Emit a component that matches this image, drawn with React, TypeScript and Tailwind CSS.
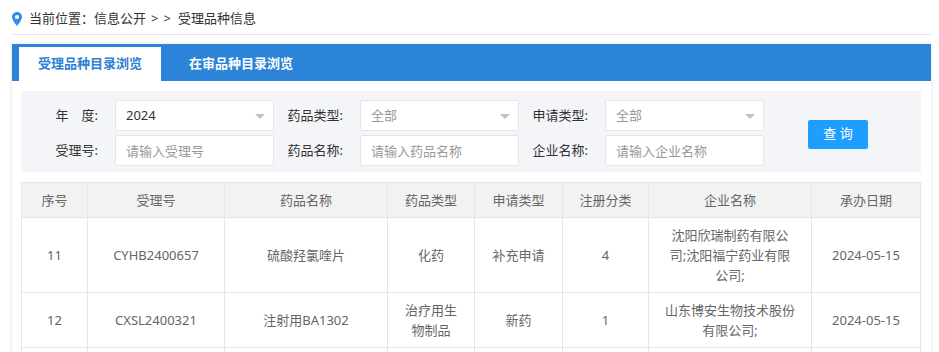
import React from "react";

const font = { fontFamily: '"Noto Sans", "Noto Sans CJK SC", sans-serif' };

function Pin() {
  return (
    <svg width="10" height="14" viewBox="0 0 10 14" className="shrink-0">
      <path
        fillRule="evenodd"
        fill="#2d8cf0"
        d="M5 0C2.2 0 0 2.2 0 5c0 3.4 5 9 5 9s5-5.6 5-9C10 2.2 7.8 0 5 0zm0 2.9a2.1 2.1 0 1 1 0 4.2 2.1 2.1 0 0 1 0-4.2z"
      />
    </svg>
  );
}

function Arrow() {
  return (
    <svg width="10" height="5" viewBox="0 0 10 5" className="absolute right-[8px] top-[13px]">
      <path d="M0 0h10L5 5z" fill="#c2c2c2" />
    </svg>
  );
}

function Label({ children }: { children: React.ReactNode }) {
  return (
    <div className="w-[86px] shrink-0 pr-[17px] text-right text-[13px] text-[#333] whitespace-nowrap">
      {children}
    </div>
  );
}

function Select({ value, dark }: { value: string; dark?: boolean }) {
  return (
    <div
      className={`relative flex h-[31px] w-[159px] items-center rounded-[2px] border border-[#e6e6e6] bg-white pl-[10px] text-[13px] ${
        dark ? "text-[#333]" : "text-[#999]"
      }`}
    >
      {value}
      <Arrow />
    </div>
  );
}

function Input({ placeholder }: { placeholder: string }) {
  return (
    <input
      placeholder={placeholder}
      className="h-[31px] w-[159px] rounded-[2px] border border-[#e6e6e6] bg-white pl-[10px] text-[13px] text-[#333] outline-none placeholder:text-[#999]"
      style={font}
    />
  );
}

const rows = [
  ["11", "CYHB2400657", "硫酸羟氯喹片", "化药", "补充申请", "4", "沈阳欣瑞制药有限公司;沈阳福宁药业有限公司;", "2024-05-15"],
  ["12", "CXSL2400321", "注射用BA1302", "治疗用生物制品", "新药", "1", "山东博安生物技术股份有限公司;", "2024-05-15"],
];

const headers = ["序号", "受理号", "药品名称", "药品类型", "申请类型", "注册分类", "企业名称", "承办日期"];
const widths = [66, 137, 163, 87, 88, 86, 163, 109];

export default function App() {
  return (
    <div className="w-[939px] bg-white" style={font}>
      <div className="ml-[12px] w-[919px]">
        <div className="flex h-[35px] items-center border-b border-[#e6e6e6] pt-[3px]">
          <Pin />
          <span className="ml-[7px] text-[13px] text-[#333]">当前位置：信息公开</span>
          <span className="ml-[5px] text-[13px] text-[#333]">&gt;</span>
          <span className="ml-[5px] text-[13px] text-[#333]">&gt;</span>
          <span className="ml-[7px] text-[13px] text-[#333]">受理品种信息</span>
        </div>

        <div className="mt-[9px] bg-white pb-[20px] shadow-[0_0_4px_rgba(0,0,0,0.12)]">
          <div className="flex h-[37px] gap-[9px] bg-[#2b84d7] pl-[7px] pt-[3px]">
            <div className="flex h-[34px] items-center bg-white px-[19px] text-[13px] font-bold text-[#2b80d4]">
              受理品种目录浏览
            </div>
            <div className="flex h-[34px] items-center px-[19px] text-[13px] font-bold text-white">
              在审品种目录浏览
            </div>
          </div>

          <div className="pl-[9px] pr-[10px]">
            <div className="mt-[10px] flex items-center bg-[#f4f5f9] pb-[6px] pl-[8px] pt-[9px]">
              <div className="flex flex-col gap-[4px]">
                <div className="flex items-center">
                  <Label>年　度:</Label>
                  <Select value="2024" dark />
                  <Label>药品类型:</Label>
                  <Select value="全部" />
                  <Label>申请类型:</Label>
                  <Select value="全部" />
                </div>
                <div className="flex items-center">
                  <Label>受理号:</Label>
                  <Input placeholder="请输入受理号" />
                  <Label>药品名称:</Label>
                  <Input placeholder="请输入药品名称" />
                  <Label>企业名称:</Label>
                  <Input placeholder="请输入企业名称" />
                </div>
              </div>
              <button
                className="ml-[44px] mt-[2px] flex h-[29px] w-[60px] items-center justify-center rounded-[2px] bg-[#1e9fff] text-[13px] text-white"
                style={font}
              >
                查 询
              </button>
            </div>

            <table className="mt-[10px] w-[899px] table-fixed border-collapse text-[13px] text-[#666]">
              <colgroup>
                {widths.map((w, i) => (
                  <col key={i} style={{ width: w }} />
                ))}
              </colgroup>
              <thead>
                <tr className="bg-[#f2f2f2]">
                  {headers.map((h) => (
                    <th
                      key={h}
                      className="border border-[#e6e6e6] px-[15px] py-[7px] text-center font-normal leading-[20px]"
                    >
                      {h}
                    </th>
                  ))}
                </tr>
              </thead>
              <tbody>
                {rows.map((r, ri) => (
                  <tr key={ri}>
                    {r.map((c, ci) => (
                      <td
                        key={ci}
                        className="border border-[#e6e6e6] px-[15px] py-[7px] text-center align-middle leading-[20px]"
                      >
                        {c}
                      </td>
                    ))}
                  </tr>
                ))}
                <tr className="h-[34px]">
                  {widths.map((_, i) => (
                    <td key={i} className="border border-[#e6e6e6]" />
                  ))}
                </tr>
              </tbody>
            </table>
          </div>
        </div>
      </div>
    </div>
  );
}
